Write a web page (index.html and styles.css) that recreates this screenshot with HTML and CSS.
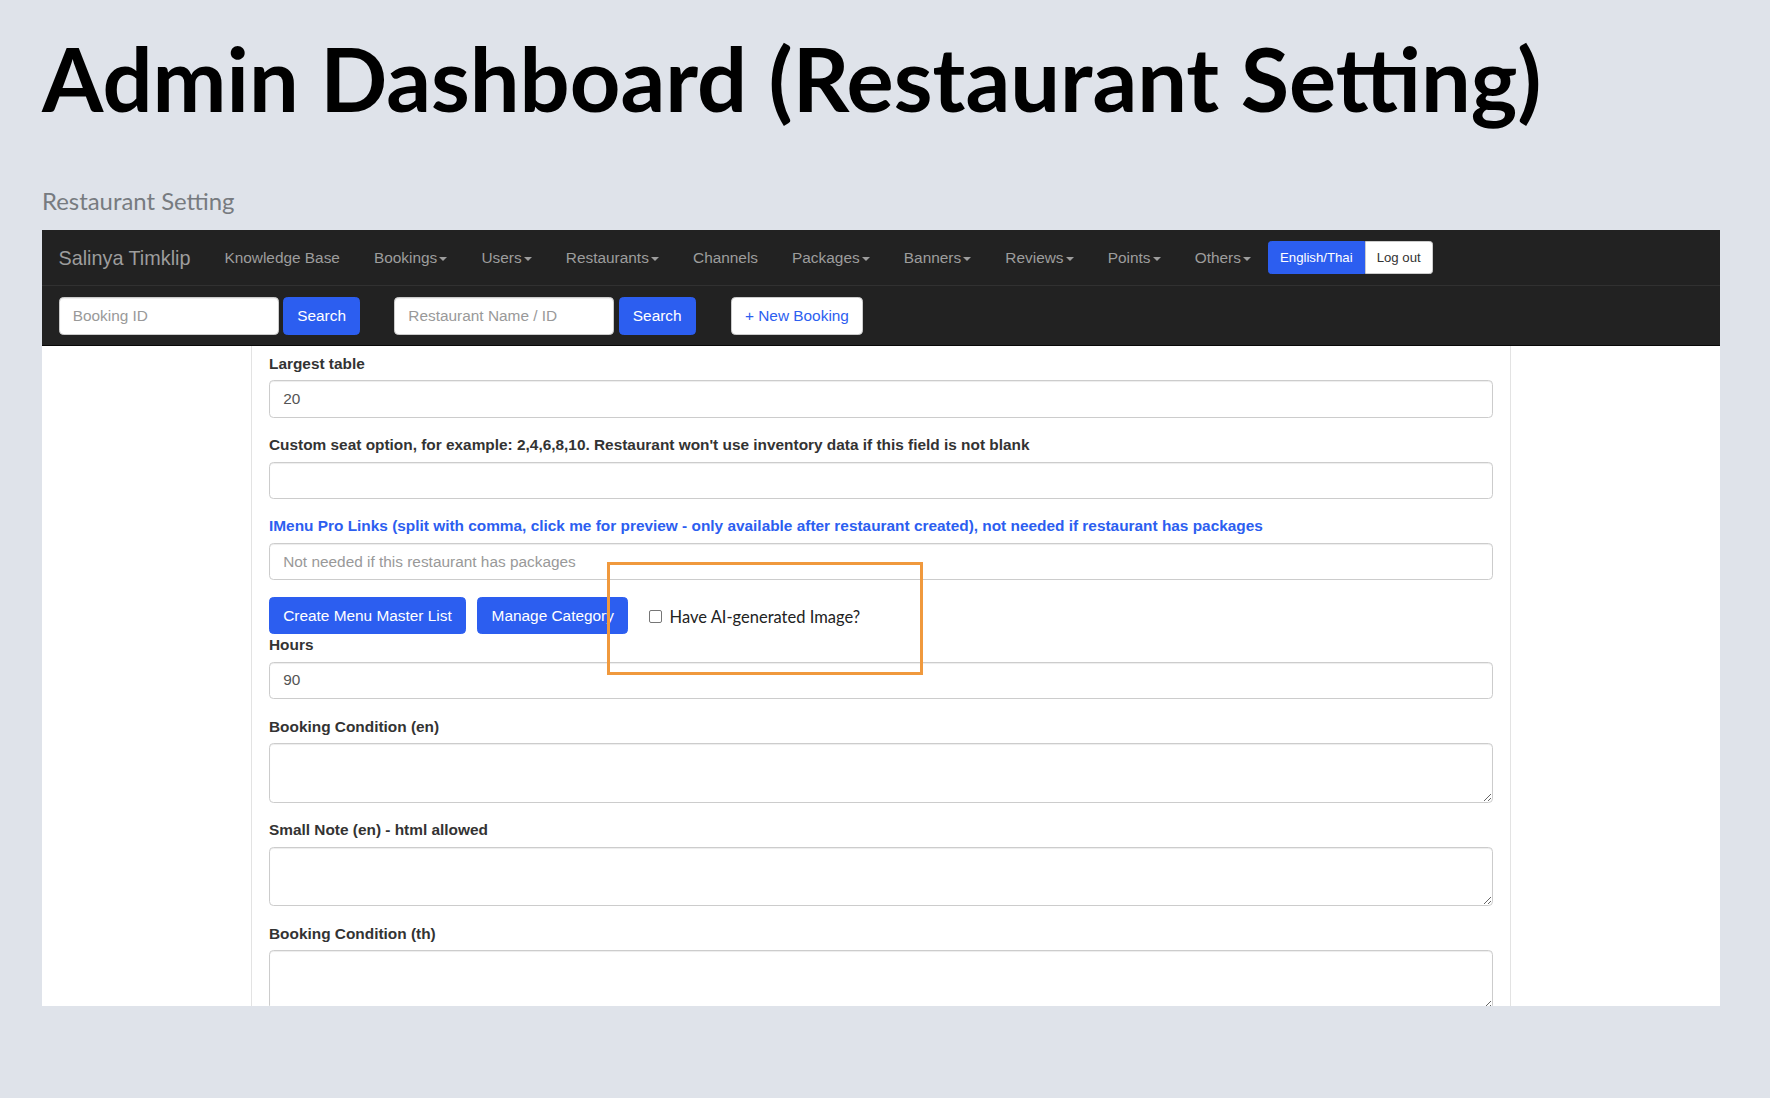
FILE: index.html
```html
<!DOCTYPE html>
<html lang="en">
<head>
<meta charset="utf-8">
<title>Admin Dashboard (Restaurant Setting)</title>
<link rel="stylesheet" href="styles.css">
</head>
<body>
<div class="slide">
  <h1 class="slide-title">Admin Dashboard (Restaurant Setting)</h1>
  <p class="slide-sub">Restaurant Setting</p>

  <div class="shot">
    <nav class="navbar">
      <div class="nav-top">
        <span class="brand">Salinya Timklip</span>
        <ul class="nav">
          <li><a>Knowledge Base</a></li>
          <li><a>Bookings<span class="caret"></span></a></li>
          <li><a>Users<span class="caret"></span></a></li>
          <li><a>Restaurants<span class="caret"></span></a></li>
          <li><a>Channels</a></li>
          <li><a>Packages<span class="caret"></span></a></li>
          <li><a>Banners<span class="caret"></span></a></li>
          <li><a>Reviews<span class="caret"></span></a></li>
          <li><a>Points<span class="caret"></span></a></li>
          <li><a>Others<span class="caret"></span></a></li>
        </ul>
        <div class="btn-group">
          <span class="btn-sm btn-sm-primary">English/Thai</span>
          <span class="btn-sm btn-sm-default">Log out</span>
        </div>
      </div>
      <div class="nav-bottom">
        <div class="nav-form">
          <input class="nav-input" type="text" placeholder="Booking ID">
          <span class="btn btn-primary">Search</span>
        </div>
        <div class="nav-form nav-form-gap">
          <input class="nav-input" type="text" placeholder="Restaurant Name / ID">
          <span class="btn btn-primary">Search</span>
        </div>
        <span class="btn btn-default btn-new">+ New Booking</span>
      </div>
    </nav>

    <div class="content">
      <div class="col-left"></div>
      <div class="col-main">
        <div class="form-group">
          <label class="lbl">Largest table</label>
          <input class="field" type="text" value="20">
        </div>
        <div class="form-group">
          <label class="lbl">Custom seat option, for example: 2,4,6,8,10. Restaurant won't use inventory data if this field is not blank</label>
          <input class="field" type="text">
        </div>
        <div class="form-group">
          <label class="lbl lbl-link">IMenu Pro Links (split with comma, click me for preview - only available after restaurant created), not needed if restaurant has packages</label>
          <input class="field" type="text" placeholder="Not needed if this restaurant has packages">
        </div>
        <div class="btn-row">
          <span class="btn btn-primary">Create Menu Master List</span>
          <span class="btn btn-primary">Manage Category</span>
          <label class="ai-check"><span class="checkbox"></span><span class="ai-text">Have AI-generated Image?</span></label>
        </div>
        <div class="form-group">
          <label class="lbl">Hours</label>
          <input class="field" type="text" value="90">
        </div>
        <div class="form-group">
          <label class="lbl">Booking Condition (en)</label>
          <textarea class="field area"></textarea>
        </div>
        <div class="form-group">
          <label class="lbl">Small Note (en) - html allowed</label>
          <textarea class="field area"></textarea>
        </div>
        <div class="form-group">
          <label class="lbl">Booking Condition (th)</label>
          <textarea class="field area"></textarea>
        </div>
      </div>
      <div class="col-right"></div>
    </div>

    <div class="highlight"></div>
  </div>
</div>
</body>
</html>
```

FILE: styles.css
```css
* { box-sizing: border-box; }

html, body {
  margin: 0;
  padding: 0;
  background: #dfe3ea;
}

.slide {
  padding: 0 50px 0 42px;
}

.slide-title {
  margin: 26px 0 0 0;
  font-family: "Lato", "Noto Sans", sans-serif;
  font-weight: 700;
  font-size: 88.3px;
  line-height: 1.2;
  color: #000;
}

.slide-sub {
  margin: 55px 0 0 0;
  font-family: "Lato", "Noto Sans", sans-serif;
  font-size: 23.9px;
  line-height: 1.2;
  color: #777b80;
}

.shot {
  position: relative;
  margin-top: 14.5px;
  height: 776px;
  overflow: hidden;
  background: #fff;
  font-family: "Liberation Sans", Arial, sans-serif;
  font-size: 15.4px;
  color: #333;
}

/* navbar */
.navbar {
  background: #222;
  border-bottom: 1px solid #080808;
}

.nav-top {
  display: flex;
  align-items: center;
  height: 56px;
  border-bottom: 1px solid #313131;
}

.brand {
  padding: 0 17px 0 16.5px;
  font-size: 19.8px;
  line-height: 22px;
  color: #9d9d9d;
}

.nav {
  display: flex;
  margin: 0;
  padding: 0;
  list-style: none;
}

.nav a {
  display: block;
  padding: 16.5px 17px;
  line-height: 22px;
  color: #9d9d9d;
  white-space: nowrap;
}

.caret {
  display: inline-block;
  width: 0;
  height: 0;
  margin-left: 2.2px;
  vertical-align: middle;
  border-top: 4.4px solid #9d9d9d;
  border-left: 4.4px solid transparent;
  border-right: 4.4px solid transparent;
}

.btn-group {
  display: flex;
}

.btn-sm {
  display: inline-block;
  height: 33px;
  padding: 0 11px;
  font-size: 13.2px;
  line-height: 31px;
  border: 1px solid transparent;
}

.btn-sm-primary {
  background: #2c5ef0;
  border-color: #2c5ef0;
  color: #fff;
  border-radius: 3.3px 0 0 3.3px;
}

.btn-sm-default {
  background: #fff;
  border-color: #ccc;
  color: #333;
  border-radius: 0 3.3px 3.3px 0;
}

.nav-bottom {
  display: flex;
  align-items: center;
  height: 59px;
  padding: 1px 16.5px 0 16.5px;
}

.nav-form {
  display: flex;
  gap: 4.5px;
}

.nav-form-gap {
  margin-left: 34px;
}

.nav-input {
  width: 220px;
  height: 37.4px;
  padding: 0 13.2px;
  border: 1px solid #ccc;
  border-radius: 4.4px;
  font-family: "Liberation Sans", Arial, sans-serif;
  font-size: 15.4px;
  color: #555;
  background: #fff;
  box-shadow: inset 0 1px 1px rgba(0, 0, 0, .075);
}

.nav-input::placeholder { color: #999; }

.btn {
  display: inline-block;
  height: 37.4px;
  padding: 0 13.2px;
  border: 1px solid transparent;
  border-radius: 4.4px;
  font-size: 15.4px;
  line-height: 35.4px;
  white-space: nowrap;
}

.btn-primary {
  background: #2c5ef0;
  border-color: #2c5ef0;
  color: #fff;
}

.btn-default {
  background: #fff;
  border-color: #ccc;
  color: #2c5ef0;
}

.btn-new {
  margin-left: 35px;
}

/* content */
.content {
  display: flex;
  align-items: stretch;
  min-height: 700px;
}

.col-left {
  width: 210px;
  flex: none;
  border-right: 1px solid #e3e3e3;
}

.col-main {
  width: 1258px;
  flex: none;
  padding: 6.5px 17px 0 17px;
}

.col-right {
  flex: 1;
  border-left: 1px solid #e3e3e3;
}

.form-group {
  margin-bottom: 16.5px;
}

.lbl {
  display: block;
  margin-bottom: 5.5px;
  font-weight: 700;
  line-height: 22px;
  color: #333;
}

.lbl-link {
  color: #2c5ef0;
}

.field {
  display: block;
  width: 100%;
  height: 37.4px;
  padding: 0 13.2px;
  border: 1px solid #ccc;
  border-radius: 4.4px;
  font-family: "Liberation Sans", Arial, sans-serif;
  font-size: 15.4px;
  color: #555;
  background: #fff;
  box-shadow: inset 0 1px 1px rgba(0, 0, 0, .075);
}

.field::placeholder { color: #999; }

.area {
  height: 59.5px;
  resize: vertical;
}

.btn-row {
  display: flex;
  align-items: center;
  gap: 11.5px;
}

.ai-check {
  display: flex;
  align-items: center;
  margin-left: 9px;
  padding-top: 2px;
}

.checkbox {
  width: 13px;
  height: 13px;
  border: 1px solid #767676;
  border-radius: 2px;
  background: #fff;
}

.ai-text {
  margin-left: 8px;
  font-family: "Lato", "Noto Sans", sans-serif;
  font-size: 16.5px;
  color: #222;
}

.highlight {
  position: absolute;
  left: 565px;
  top: 332px;
  width: 316px;
  height: 113px;
  border: 3px solid #f0993d;
}
```
